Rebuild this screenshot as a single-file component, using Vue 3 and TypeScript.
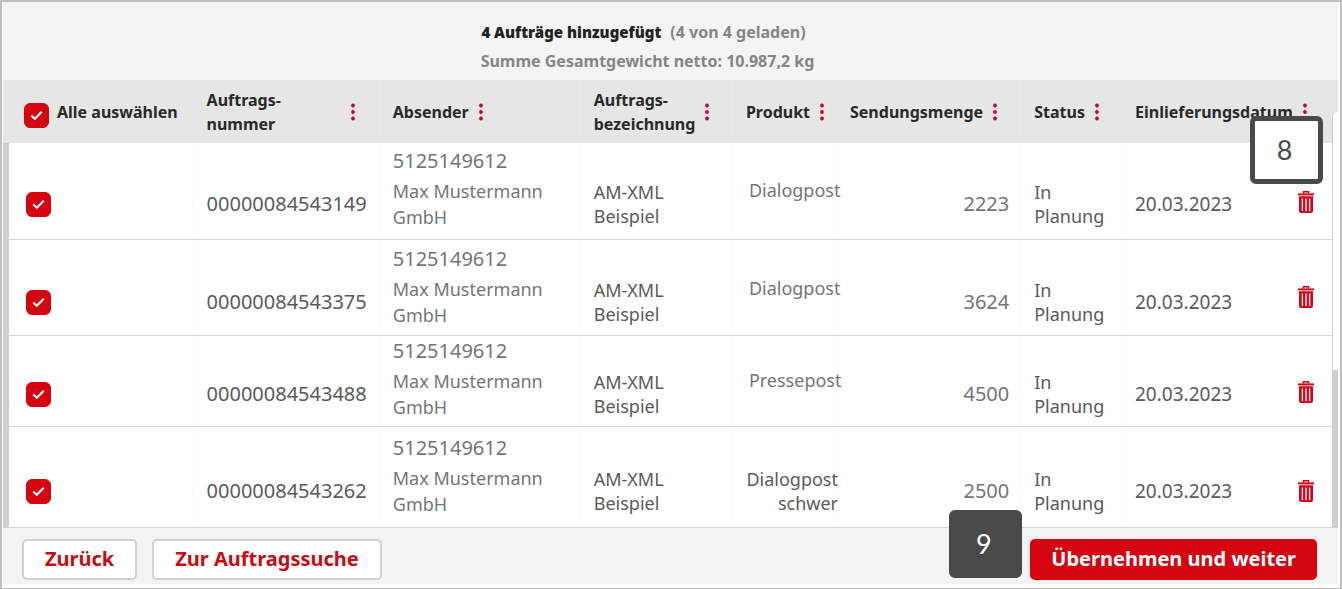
<script setup lang="ts">
import { computed, ref } from 'vue'

interface Order {
  id: string
  product: string[]
  amount: string
  selected: boolean
  density: string
}

const orders = ref<Order[]>([
  { id: '00000084543149', product: ['Dialogpost'], amount: '2223', selected: true, density: 'medium' },
  { id: '00000084543375', product: ['Dialogpost'], amount: '3624', selected: true, density: 'normal' },
  { id: '00000084543488', product: ['Pressepost'], amount: '4500', selected: true, density: 'tight' },
  { id: '00000084543262', product: ['Dialogpost', 'schwer'], amount: '2500', selected: true, density: 'loose' },
])

const allSelected = computed<boolean>({
  get: () => orders.value.every((o) => o.selected),
  set: (value) => orders.value.forEach((o) => (o.selected = value)),
})

const headings = [
  { key: 'number', lines: ['Auftrags-', 'nummer'], span: 1 },
  { key: 'sender', lines: ['Absender'], span: 1 },
  { key: 'name', lines: ['Auftrags-', 'bezeichnung'], span: 1 },
  { key: 'product', lines: ['Produkt'], span: 1 },
  { key: 'amount', lines: ['Sendungsmenge'], span: 1 },
  { key: 'status', lines: ['Status'], span: 1 },
  { key: 'date', lines: ['Einlieferungsdatum'], span: 2 },
]
</script>

<template>
  <main class="frame">
    <header class="summary">
      <p><strong>4 Aufträge hinzugefügt</strong><span class="loaded">(4 von 4 geladen)</span></p>
      <p>Summe Gesamtgewicht netto: 10.987,2 kg</p>
    </header>

    <section class="orders">
      <table>
        <colgroup>
          <col class="w-select" /><col class="w-number" /><col class="w-sender" /><col class="w-name" />
          <col class="w-product" /><col class="w-amount" /><col class="w-status" /><col class="w-date" />
          <col class="w-action" />
        </colgroup>
        <thead>
          <tr>
            <th scope="col" class="select">
              <label class="select-all">
                <span class="check">
                  <input v-model="allSelected" type="checkbox" />
                  <svg viewBox="0 0 24 24" aria-hidden="true"><path d="M7 12l3.4 3.2L17 8.4" /></svg>
                </span>
                Alle auswählen
              </label>
            </th>
            <th v-for="h in headings" :key="h.key" scope="col" :colspan="h.span" :class="h.key">
              <div class="heading">
                <span><span v-for="line in h.lines" :key="line" class="line">{{ line }}</span></span>
                <button type="button" class="menu" aria-label="Spaltenmenü">
                  <svg viewBox="0 0 4 18" aria-hidden="true">
                    <circle cx="2" cy="2.5" r="1.9" /><circle cx="2" cy="9" r="1.9" /><circle cx="2" cy="15.5" r="1.9" />
                  </svg>
                </button>
              </div>
            </th>
          </tr>
        </thead>
        <tbody>
          <tr v-for="o in orders" :key="o.id" :class="o.density">
            <td class="select">
              <span class="check">
                <input v-model="o.selected" type="checkbox" :aria-label="'Auftrag ' + o.id" />
                <svg viewBox="0 0 24 24" aria-hidden="true"><path d="M7 12l3.4 3.2L17 8.4" /></svg>
              </span>
            </td>
            <td class="number">{{ o.id }}</td>
            <td class="sender">
              <p class="sender-id">5125149612</p>
              <p>Max Mustermann<br />GmbH</p>
            </td>
            <td class="name">AM-XML<br />Beispiel</td>
            <td class="product" :class="{ wrapped: o.product.length > 1 }">
              <span v-for="line in o.product" :key="line" class="line">{{ line }}</span>
            </td>
            <td class="amount">{{ o.amount }}</td>
            <td class="status">In<br />Planung</td>
            <td class="date">20.03.2023</td>
            <td class="action">
              <button type="button" class="trash" :aria-label="'Auftrag ' + o.id + ' löschen'">
                <svg viewBox="0 0 16 22" aria-hidden="true">
                  <path class="lid" d="M5.5 2.5V.8h5v1.7" />
                  <path d="M0 2.4h16v2H0z" />
                  <path d="M1 5.2h14V20a2 2 0 0 1-2 2H3a2 2 0 0 1-2-2z" />
                  <path class="slot" d="M4.4 7.4V20M8 7.4V20M11.6 7.4V20" />
                </svg>
              </button>
            </td>
          </tr>
        </tbody>
      </table>
      <div class="track"><div class="thumb"></div></div>
      <span class="badge badge-light">8</span>
    </section>

    <footer class="actions">
      <button type="button" class="btn">Zurück</button>
      <button type="button" class="btn">Zur Auftragssuche</button>
      <div class="submit">
        <button type="button" class="btn primary">Übernehmen und weiter</button>
        <span class="badge badge-dark">9</span>
      </div>
    </footer>
  </main>
</template>

<style>
body {
  margin: 0;
  background: #fff;
}
</style>

<style scoped>
* {
  box-sizing: border-box;
}

.frame {
  border: 2px solid #bfbfbf;
  padding: 0 2px 4px 1px;
  background: #fff;
  color: #5a5a5a;
  font: 18px/24px "Noto Sans", "Open Sans", sans-serif;
}

p {
  margin: 0;
}

.summary {
  padding: 16px 46px 4px 0;
  background: #f4f4f4;
  color: #858585;
  font-size: 16px;
  font-weight: 700;
  line-height: 29px;
  text-align: center;
}

.summary p:first-child {
  padding-right: 8px;
}

.summary strong {
  color: #222;
  font-size: 15px;
}

.loaded {
  margin-left: 9px;
}

.orders {
  position: relative;
}

table {
  width: 100%;
  table-layout: fixed;
  border-collapse: separate;
  border-spacing: 0;
}

.w-select { width: 14.2%; }
.w-number { width: 13.95%; }
.w-sender { width: 15.05%; }
.w-name { width: 11.4%; }
.w-product { width: 7.95%; }
.w-amount { width: 13.65%; }
.w-status { width: 7.55%; }
.w-date { width: 12.3%; }
.w-action { width: 3.95%; }

th {
  height: 63px;
  padding: 0 0 0 13px;
  background: #e6e6e6;
  border-left: 1px solid #e9e9e9;
  color: #292929;
  font-size: 16px;
  font-weight: 700;
  text-align: left;
  white-space: nowrap;
}

th.select {
  border-left: 0;
  padding-left: 21px;
}

th.amount {
  padding-left: 11px;
}

.heading {
  display: flex;
  align-items: center;
  gap: 10px;
}

th.number .heading {
  justify-content: space-between;
  padding-right: 24px;
}

.line {
  display: block;
}

.menu,
.trash {
  display: block;
  padding: 0;
  border: 0;
  background: none;
}

.menu svg {
  display: block;
  width: 4px;
  height: 18px;
  fill: #d0021b;
}

.select-all {
  display: flex;
  align-items: center;
  gap: 8px;
}

.check {
  position: relative;
  display: block;
  flex: none;
  width: 25px;
  height: 25px;
}

.select-all .check {
  margin-top: 8px;
}

.check input {
  display: block;
  appearance: none;
  width: 100%;
  height: 100%;
  margin: 0;
  border: 1px solid #d40511;
  border-radius: 6px;
  background: #fff;
}

.check input:checked {
  background: #d40511;
}

.check svg {
  position: absolute;
  inset: 0;
  fill: none;
  stroke: #fff;
  stroke-width: 2;
  pointer-events: none;
}

td {
  padding: 0 0 calc(var(--bottom) + 2px) 13px;
  border-bottom: 1px solid #d6d6d6;
  border-left: 1px solid #fafafa;
  vertical-align: bottom;
  white-space: nowrap;
}

.medium { --top: 5px; --bottom: 9px; --trash: 26px; }
.normal { --top: 6px; --bottom: 7px; --trash: 27px; }
.tight { --top: 2px; --bottom: 6px; --trash: 23px; }
.loose { --top: 8px; --bottom: 10px; --trash: 25px; }

td.select {
  border-left: 6px solid #cfcfcf;
  padding-left: 17px;
  padding-bottom: calc(var(--bottom) + 13px);
}

td.number,
td.date,
td.amount {
  padding-bottom: calc(var(--bottom) + 14px);
  font-size: 20px;
}

td.date {
  font-size: 19px;
}

td.sender {
  padding-top: var(--top);
  padding-bottom: var(--bottom);
  color: #757575;
  line-height: 26px;
}

.sender-id {
  margin-bottom: 4px;
  font-size: 20px;
}

td.product {
  padding-left: 16px;
  padding-bottom: calc(var(--bottom) + 28px);
  color: #757575;
}

td.product.wrapped {
  padding-bottom: calc(var(--bottom) + 2px);
  padding-left: 0;
  color: #5a5a5a;
  text-align: right;
}

td.amount {
  padding-right: 11px;
  color: #757575;
  text-align: right;
}

td.action {
  padding: 0 0 var(--trash) 13px;
  border-left: 0;
  border-right: 6px solid #fff;
}

.trash svg {
  display: block;
  width: 16px;
  height: 22px;
  fill: #d40519;
}

.trash .lid {
  fill: none;
  stroke: #d40519;
  stroke-width: 1.6;
}

.trash .slot {
  stroke: #fff;
  stroke-width: 1.3;
}

.track {
  position: absolute;
  top: 32px;
  right: 0;
  bottom: 0;
  display: flex;
  flex-direction: column;
  justify-content: flex-end;
  width: 6px;
  background: #fff;
  border-left: 1px solid #d0d0d0;
  border-radius: 5px 0 0 0;
}

.thumb {
  height: 38%;
  background: #cfcfcf;
}

.badge {
  position: absolute;
  display: flex;
  align-items: center;
  justify-content: center;
  width: 73px;
  height: 68px;
  border: 5px solid #4a4a4a;
  border-radius: 6px;
  font-family: Lato, "Noto Sans", sans-serif;
  font-size: 27px;
}

.badge-light {
  top: 36px;
  right: 15px;
  padding-right: 4px;
  background: #fff;
  color: #4a4a4a;
}

.badge-dark {
  right: calc(100% + 8px);
  bottom: 2px;
  padding-right: 4px;
  background: #4a4a4a;
  color: #fff;
}

.actions {
  display: flex;
  gap: 15px;
  padding: 11px 21px 4px 19px;
  background: #f3f3f3;
}

.btn {
  height: 41px;
  padding: 0 21px 2px;
  border: 2px solid #d2d2d2;
  border-radius: 5px;
  background: #fff;
  color: #c80a14;
  font: 700 20px/24px "Noto Sans", "Open Sans", sans-serif;
}

.submit {
  position: relative;
  margin-left: auto;
}

.primary {
  padding: 0 19px 2px;
  border-color: #d40511;
  background: #d40511;
  color: #fff;
}
</style>
